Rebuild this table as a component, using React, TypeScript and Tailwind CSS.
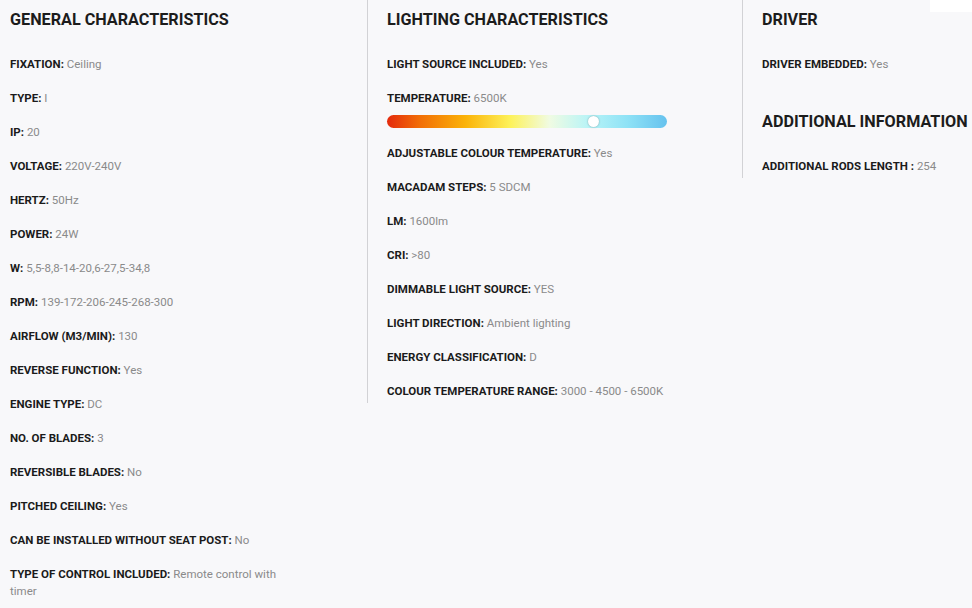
import React from "react";

type Row = [string, string];

const general: Row[] = [
  ["FIXATION:", "Ceiling"],
  ["TYPE:", "I"],
  ["IP:", "20"],
  ["VOLTAGE:", "220V-240V"],
  ["HERTZ:", "50Hz"],
  ["POWER:", "24W"],
  ["W:", "5,5-8,8-14-20,6-27,5-34,8"],
  ["RPM:", "139-172-206-245-268-300"],
  ["AIRFLOW (M3/MIN):", "130"],
  ["REVERSE FUNCTION:", "Yes"],
  ["ENGINE TYPE:", "DC"],
  ["NO. OF BLADES:", "3"],
  ["REVERSIBLE BLADES:", "No"],
  ["PITCHED CEILING:", "Yes"],
  ["CAN BE INSTALLED WITHOUT SEAT POST:", "No"],
  ["TYPE OF CONTROL INCLUDED:", "Remote control with timer"],
];

const lightingAfter: Row[] = [
  ["ADJUSTABLE COLOUR TEMPERATURE:", "Yes"],
  ["MACADAM STEPS:", "5 SDCM"],
  ["LM:", "1600lm"],
  ["CRI:", ">80"],
  ["DIMMABLE LIGHT SOURCE:", "YES"],
  ["LIGHT DIRECTION:", "Ambient lighting"],
  ["ENERGY CLASSIFICATION:", "D"],
  ["COLOUR TEMPERATURE RANGE:", "3000 - 4500 - 6500K"],
];

function Item({ label, value, last }: { label: string; value: string; last?: boolean }) {
  return (
    <p className={`text-[11.5px] leading-[17px] w-[285px] ${last ? "" : "mb-[17px]"}`}>
      <b className="font-bold text-[#1b1b1b]">{label}</b>{" "}
      <span className="text-[#8a8a8a]">{value}</span>
    </p>
  );
}

function Heading({ children }: { children: React.ReactNode }) {
  return (
    <h2 className="text-[16.2px] leading-[22px] font-bold text-[#1c1c1c] mb-[25px] whitespace-nowrap">
      {children}
    </h2>
  );
}

export default function App() {
  return (
    <div
      className="relative min-h-[608px] w-[972px] overflow-hidden bg-[#f8f8fa]"
      style={{ fontFamily: "Roboto, 'Noto Sans', 'Liberation Sans', sans-serif" }}
    >
      <div className="absolute right-0 top-0 h-[12px] w-[42px] bg-white" />
      <div className="flex items-start">
        <div className="w-[367px] shrink-0 pl-[10px] pt-[9px]">
          <Heading>GENERAL CHARACTERISTICS</Heading>
          {general.map(([l, v], i) => (
            <Item key={l} label={l} value={v} last={i === general.length - 1} />
          ))}
        </div>
        <div className="w-[375px] shrink-0 border-l border-[#d2d2d5] pl-[19px] pt-[9px] pb-[3px]">
          <Heading>LIGHTING CHARACTERISTICS</Heading>
          <Item label="LIGHT SOURCE INCLUDED:" value="Yes" />
          <p className="text-[11.5px] leading-[17px] w-[285px] mb-[8px]">
            <b className="font-bold text-[#1b1b1b]">TEMPERATURE:</b>{" "}
            <span className="text-[#8a8a8a]">6500K</span>
          </p>
          <div className="relative mb-[17px] h-[13px] w-[280px] rounded-full bg-[linear-gradient(90deg,#e42a0c_0%,#f26f06_12%,#fbb308_28%,#fdf25a_44%,#f0fbe2_58%,#b8f4f7_72%,#8ee2f6_86%,#66c2ee_100%)]">
            <div className="absolute left-[201px] top-[1px] h-[11px] w-[11px] rounded-full bg-white shadow-[0_0_2px_rgba(0,0,0,0.35)]" />
          </div>
          {lightingAfter.map(([l, v], i) => (
            <Item key={l} label={l} value={v} last={i === lightingAfter.length - 1} />
          ))}
        </div>
        <div className="flex-1 border-l border-[#d2d2d5] pl-[19px] pt-[9px] pb-[3px]">
          <Heading>DRIVER</Heading>
          <Item label="DRIVER EMBEDDED:" value="Yes" />
          <div className="pt-[21px]">
            <Heading>ADDITIONAL INFORMATION</Heading>
          </div>
          <Item label="ADDITIONAL RODS LENGTH :" value="254" last />
        </div>
      </div>
    </div>
  );
}
